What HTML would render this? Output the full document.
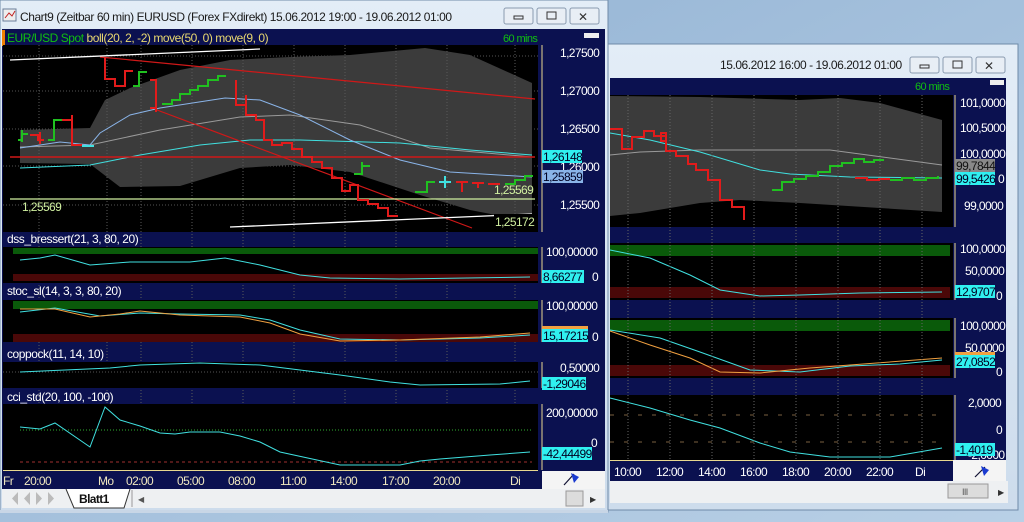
<!DOCTYPE html>
<html><head><meta charset="utf-8"><style>
body{margin:0;width:1024px;height:522px;overflow:hidden;background:#9db9d6;font-family:"Liberation Sans",sans-serif}
svg{display:block}
text{font-family:"Liberation Sans",sans-serif;letter-spacing:-0.6px}
.t{letter-spacing:-0.45px}
</style></head><body>
<svg width="1024" height="522" viewBox="0 0 1024 522" xmlns="http://www.w3.org/2000/svg">
<defs>
<linearGradient id="desk" x1="0" y1="0" x2="1" y2="1"><stop offset="0" stop-color="#8fb0d2"/><stop offset="1" stop-color="#b9d0e6"/></linearGradient>
<linearGradient id="tb" x1="0" y1="0" x2="0" y2="1"><stop offset="0" stop-color="#e3edf7"/><stop offset="1" stop-color="#cddcec"/></linearGradient>
</defs>
<rect width="1024" height="522" fill="url(#desk)"/>

<!-- RIGHT WINDOW -->
<rect x="600" y="44" width="418" height="466" fill="url(#tb)" stroke="#6f8aa8"/>
<text class="t" x="720" y="69" font-size="12" fill="#1a1a1a">15.06.2012 16:00 - 19.06.2012 01:00</text>
<g fill="#e8eef5" stroke="#8a9bb0"><rect x="910" y="57" width="29" height="16" rx="2"/><rect x="943" y="57" width="29" height="16" rx="2"/><rect x="976" y="57" width="29" height="16" rx="2"/></g>
<rect x="920" y="65" width="9" height="3" fill="none" stroke="#333"/><rect x="953" y="61" width="9" height="7" fill="none" stroke="#333"/>
<text x="984" y="70" font-size="12" fill="#333">✕</text>
<rect x="610" y="78" width="396" height="403" fill="#0b1150"/>
<text x="915" y="90" font-size="11" fill="#10c010">60 mins</text>
<rect x="990" y="80" width="14" height="5" fill="#eee"/>
<rect x="610" y="95" width="343" height="132" fill="#000"/>
<polygon points="610,96 700,97 800,100 840,98 880,103 942,120 942,212 880,208 800,203 740,200 700,203 640,213 610,216" fill="#3b3b3b"/>
<polyline points="610,155 640,152 700,150 830,150 942,165" fill="none" stroke="#9a9a9a"/>
<polyline points="610,133 650,140 700,152 760,170 790,174 850,177 942,178" fill="none" stroke="#40e0e0"/>
<path d="M610,129h12v20h10v-12h12v-6h10v5h12v5h-5v-8h5v18h10v5h12v8h8v6h12v10h12v20h12v7h12v13" fill="none" stroke="#e21b1b" stroke-width="2"/>
<path d="M772,190h10v-8h12v-3h12v-3h12v-4h12v-6h12v-3h12v-4h10v3h10v-2h10" fill="none" stroke="#20c020" stroke-width="2"/>
<path d="M855,178h12v2h12v-1h10v1" fill="none" stroke="#e21b1b" stroke-width="2"/>
<path d="M890,180h12v-2h12v2h12v-2h12v-2" fill="none" stroke="#20c020" stroke-width="2"/>
<line x1="955" y1="95" x2="955" y2="227" stroke="#e8d890"/>
<g font-size="12" fill="#fff"><text x="960" y="107">101,0000</text><text x="960" y="132">100,5000</text><text x="960" y="158">100,0000</text><text x="964" y="210">99,0000</text></g>
<rect x="955" y="159" width="40" height="13" fill="#888"/><text x="956" y="170" font-size="12" fill="#111">99,7844</text>
<rect x="955" y="172" width="40" height="13" fill="#30f0f0"/><text x="956" y="183" font-size="12" fill="#002">99,5426</text><text x="998" y="183" font-size="12" fill="#fff">0</text>
<rect x="610" y="243" width="343" height="57" fill="#000"/>
<rect x="610" y="245" width="340" height="11" fill="#0a5a0a"/><rect x="610" y="287" width="340" height="11" fill="#4a0808"/>
<polyline points="610,250 650,258 690,275 720,290 760,296 800,295 860,293 942,292" fill="none" stroke="#40e0e0"/>
<line x1="955" y1="243" x2="955" y2="300" stroke="#e8d890"/>
<g font-size="12" fill="#fff"><text x="960" y="253">100,0000</text><text x="965" y="275">50,0000</text><text x="996" y="300">0</text></g>
<rect x="955" y="285" width="40" height="13" fill="#30f0f0"/><text x="956" y="296" font-size="12" fill="#002">12,9707</text>
<rect x="610" y="318" width="343" height="60" fill="#000"/>
<rect x="610" y="320" width="340" height="11" fill="#0a5a0a"/><rect x="610" y="365" width="340" height="11" fill="#4a0808"/>
<polyline points="610,330 660,338 700,352 750,370 800,372 850,366 900,364 942,360" fill="none" stroke="#40e0e0"/>
<polyline points="610,331 650,345 690,358 720,372 760,373 810,368 850,365 942,358" fill="none" stroke="#f0a040"/>
<line x1="955" y1="318" x2="955" y2="378" stroke="#e8d890"/>
<g font-size="12" fill="#fff"><text x="960" y="330">100,0000</text><text x="965" y="352">50,0000</text><text x="996" y="376">0</text></g>
<rect x="955" y="352" width="40" height="3" fill="#f0a040"/>
<rect x="955" y="355" width="40" height="13" fill="#30f0f0"/><text x="956" y="366" font-size="12" fill="#002">27,0852</text>
<rect x="610" y="395" width="343" height="65" fill="#000"/>
<line x1="610" y1="415" x2="942" y2="415" stroke="#7a6040" stroke-dasharray="4,10"/>
<line x1="610" y1="442" x2="942" y2="442" stroke="#7a6040" stroke-dasharray="4,10"/>
<polyline points="610,398 650,408 690,420 720,428 760,443 790,452 830,457 890,457 942,448" fill="none" stroke="#40e0e0"/>
<line x1="955" y1="395" x2="955" y2="460" stroke="#e8d890"/>
<g font-size="12" fill="#fff"><text x="968" y="407">2,0000</text><text x="996" y="434">0</text><text x="968" y="459">-2,0000</text></g>
<rect x="955" y="443" width="40" height="13" fill="#30f0f0"/><text x="956" y="454" font-size="12" fill="#002">-1,4019</text>
<g stroke="#666" stroke-dasharray="1,2"><line x1="628" y1="95" x2="628" y2="460"/><line x1="670" y1="95" x2="670" y2="460"/><line x1="712" y1="95" x2="712" y2="460"/><line x1="754" y1="95" x2="754" y2="460"/><line x1="796" y1="95" x2="796" y2="460"/><line x1="838" y1="95" x2="838" y2="460"/><line x1="880" y1="95" x2="880" y2="460"/><line x1="922" y1="95" x2="922" y2="460"/></g>
<rect x="610" y="460" width="343" height="1" fill="#e8d890"/>
<g font-size="12" fill="#fff"><text x="614" y="476">10:00</text><text x="656" y="476">12:00</text><text x="698" y="476">14:00</text><text x="740" y="476">16:00</text><text x="782" y="476">18:00</text><text x="824" y="476">20:00</text><text x="866" y="476">22:00</text><text x="915" y="476">Di</text></g>
<rect x="953" y="460" width="53" height="21" fill="#f4f4f4"/>
<path d="M975,477 L985,467" stroke="#113" stroke-width="1.2"/><path d="M981,466 L989,470 L984,476 Z" fill="#1a3ad0"/>
<rect x="610" y="481" width="398" height="22" fill="#eef0f2"/>
<rect x="948" y="484" width="40" height="14" fill="#dcdcdc" stroke="#999"/><text x="962" y="495" font-size="9" fill="#555">III</text>
<text x="998" y="495" font-size="8" fill="#333">▶</text>

<!-- LEFT WINDOW -->
<rect x="0" y="0" width="608" height="512" fill="url(#tb)" stroke="#6f8aa8"/>
<rect x="3" y="9" width="13" height="12" fill="#eee" stroke="#6a7d99"/><path d="M5,18 L9,13 L12,16 L15,11" stroke="#c02020" fill="none"/>
<text class="t" x="20" y="21" font-size="12" fill="#1a1a1a">Chart9 (Zeitbar 60 min)  EURUSD (Forex FXdirekt) 15.06.2012 19:00 - 19.06.2012 01:00</text>
<g fill="#e8eef5" stroke="#8a9bb0"><rect x="504" y="8" width="29" height="16" rx="2"/><rect x="537" y="8" width="29" height="16" rx="2"/><rect x="570" y="8" width="29" height="16" rx="2"/></g>
<rect x="514" y="16" width="9" height="3" fill="none" stroke="#333"/><rect x="547" y="12" width="9" height="7" fill="none" stroke="#333"/>
<text x="578" y="21" font-size="12" fill="#333">✕</text>
<rect x="2" y="29" width="603" height="460" fill="#0b1150"/>
<rect x="2" y="30" width="3" height="16" fill="#f08000"/>
<text class="t" x="7" y="42" font-size="12"><tspan fill="#10c010">EUR/USD Spot </tspan><tspan fill="#e8d870">boll(20, 2, -2) move(50, 0) move(9, 0)</tspan></text>
<text x="503" y="42" font-size="11" fill="#10c010">60 mins</text>
<rect x="584" y="33" width="15" height="5" fill="#eee"/>
<rect x="3" y="45" width="535" height="187" fill="#000"/>
<g stroke="#555" stroke-dasharray="1,2"><line x1="3" y1="56" x2="538" y2="56"/><line x1="3" y1="91" x2="538" y2="91"/><line x1="3" y1="129" x2="538" y2="129"/><line x1="3" y1="166" x2="538" y2="166"/><line x1="3" y1="205" x2="538" y2="205"/></g>
<polygon points="20,130 90,128 105,100 130,88 180,70 230,60 290,57 350,55 425,48 470,55 532,83 532,222 470,210 420,195 350,172 290,165 240,168 180,186 120,187 90,164 20,163" fill="#3b3b3b"/>
<g stroke="#5a5a5a" stroke-dasharray="1,2"><line x1="39" y1="45" x2="39" y2="470"/><line x1="107" y1="45" x2="107" y2="470"/><line x1="141" y1="45" x2="141" y2="470"/><line x1="192" y1="45" x2="192" y2="470"/><line x1="243" y1="45" x2="243" y2="470"/><line x1="294" y1="45" x2="294" y2="470"/><line x1="345" y1="45" x2="345" y2="470"/><line x1="396" y1="45" x2="396" y2="470"/><line x1="447" y1="45" x2="447" y2="470"/><line x1="515" y1="45" x2="515" y2="470"/></g>
<polyline points="20,147 90,145 160,130 240,117 290,115 360,125 430,148 532,157" fill="none" stroke="#9a9a9a"/>
<polyline points="20,168 90,165 140,155 200,145 250,140 300,140 400,143 470,150 532,155" fill="none" stroke="#40e0e0"/>
<polyline points="20,148 60,142 90,145 100,133 130,115 160,108 225,98 260,100 300,115 350,140 400,160 450,172 532,177" fill="none" stroke="#8ab4e8"/>
<line x1="10" y1="157" x2="535" y2="157" stroke="#d01818" stroke-width="1.5"/>
<line x1="100" y1="57" x2="535" y2="99" stroke="#d01818" stroke-width="1.2"/>
<line x1="157" y1="110" x2="472" y2="228" stroke="#d01818" stroke-width="1.2"/>
<line x1="10" y1="60" x2="260" y2="49" stroke="#fff" stroke-width="1.3"/>
<line x1="230" y1="227" x2="532" y2="214" stroke="#fff" stroke-width="1.3"/>
<line x1="10" y1="199" x2="535" y2="199" stroke="#d0f0a0" stroke-width="1.2"/>
<path d="M18,140h4m0,-10v12m0,-8h6" stroke="#20c020" stroke-width="2" fill="none"/>
<path d="M30,135h8v5h6m-4,-8v12" stroke="#e21b1b" stroke-width="2" fill="none"/>
<path d="M48,140h6v-20h8" stroke="#20c020" stroke-width="2" fill="none"/>
<path d="M62,120h10v25h10m-10,-30v30" stroke="#e21b1b" stroke-width="2" fill="none"/>
<path d="M82,146h12" stroke="#40e0e0" stroke-width="2" fill="none"/>
<path d="M105,57v22h10v7h10v-15h8" stroke="#e21b1b" stroke-width="2" fill="none"/>
<path d="M133,86h6v-14h8m-8,0v12" stroke="#20c020" stroke-width="2" fill="none"/>
<path d="M150,80h6v28h-6m6,-26v30" stroke="#e21b1b" stroke-width="2" fill="none"/>
<path d="M162,104h10v-4h8v-6h10v-4h8v-4h10v-6h10v-4h8" stroke="#20c020" stroke-width="2" fill="none"/>
<path d="M236,80v25h10v-6m0,-4v20h10v5h8v20h8v5h10v-2h10v6h10v8h10v5h10v6h10v10h10v13h8v-6h8v15h10v4h10v4h10v8h10" stroke="#e21b1b" stroke-width="2" fill="none"/>
<path d="M354,174h8v-12m0,4h8" stroke="#20c020" stroke-width="2" fill="none"/>
<path d="M415,192h12v-10h8" stroke="#20c020" stroke-width="2" fill="none"/>
<path d="M439,182h12m-6,-6v12" stroke="#40e0e0" stroke-width="2" fill="none"/>
<path d="M456,182h12m-6,0v10m10,-9h12m-6,0v5m10,-4h12" stroke="#e21b1b" stroke-width="2" fill="none"/>
<path d="M505,184h10v-4h10v-4h8" stroke="#20c020" stroke-width="2" fill="none"/>
<text x="22" y="211" font-size="12" fill="#d0f0a0">1,25569</text>
<text x="494" y="194" font-size="12" fill="#d0f0a0">1,25569</text>
<rect x="494" y="214" width="40" height="13" fill="#000"/><text x="495" y="226" font-size="12" fill="#d0f0a0">1,25172</text>
<line x1="542" y1="45" x2="542" y2="232" stroke="#e8d890"/>
<g font-size="12" fill="#fff"><text x="560" y="57">1,27500</text><text x="560" y="95">1,27000</text><text x="560" y="133">1,26500</text><text x="560" y="171">1,26000</text><text x="560" y="209">1,25500</text></g>
<rect x="542" y="150" width="40" height="13" fill="#30f0f0"/><text x="543" y="161" font-size="12" fill="#002">1,26148</text>
<rect x="542" y="170" width="41" height="13" fill="#8ab4e8"/><text x="543" y="181" font-size="12" fill="#002">1,25859</text>
<text class="t" x="7" y="243" font-size="12" fill="#fff">dss_bressert(21, 3, 80, 20)</text>
<rect x="3" y="247" width="535" height="36" fill="#000"/>
<rect x="13" y="248" width="525" height="6" fill="#0a5a0a"/><rect x="13" y="274" width="525" height="7" fill="#4a0808"/>
<polyline points="20,260 40,258 55,255 90,265 130,262 190,262 225,258 260,265 300,275 330,278 400,279 530,277" fill="none" stroke="#40e0e0"/>
<line x1="542" y1="247" x2="542" y2="283" stroke="#e8d890"/>
<text x="546" y="256" font-size="12" fill="#fff">100,00000</text>
<rect x="542" y="270" width="42" height="13" fill="#30f0f0"/><text x="543" y="281" font-size="12" fill="#002">8,66277</text><text x="592" y="281" font-size="12" fill="#fff">0</text>
<text class="t" x="7" y="295" font-size="12" fill="#fff">stoc_sl(14, 3, 3, 80, 20)</text>
<rect x="3" y="300" width="535" height="42" fill="#000"/>
<rect x="13" y="301" width="525" height="8" fill="#0a5a0a"/><rect x="13" y="334" width="525" height="8" fill="#4a0808"/>
<polyline points="20,312 55,308 100,316 140,313 180,314 240,315 270,320 300,330 340,339 400,340 480,338 530,335" fill="none" stroke="#40e0e0"/>
<polyline points="20,309 55,309 90,317 120,314 140,311 180,315 240,317 270,323 300,334 340,341 400,340 480,337 530,333" fill="none" stroke="#f0a040"/>
<line x1="542" y1="300" x2="542" y2="342" stroke="#e8d890"/>
<text x="546" y="310" font-size="12" fill="#fff">100,00000</text>
<rect x="542" y="326" width="46" height="3" fill="#f0a040"/>
<rect x="542" y="329" width="46" height="13" fill="#30f0f0"/><text x="543" y="340" font-size="12" fill="#002">15,17215</text><text x="592" y="341" font-size="12" fill="#fff">0</text>
<text class="t" x="7" y="358" font-size="12" fill="#fff">coppock(11, 14, 10)</text>
<rect x="3" y="362" width="535" height="26" fill="#000"/>
<line x1="3" y1="372" x2="538" y2="372" stroke="#555" stroke-dasharray="1,2"/>
<polyline points="20,372 110,368 140,365 200,363 260,365 300,370 340,375 390,382 420,385 500,384 530,381" fill="none" stroke="#40e0e0"/>
<line x1="542" y1="362" x2="542" y2="388" stroke="#e8d890"/>
<text x="560" y="372" font-size="12" fill="#fff">0,50000</text>
<rect x="542" y="377" width="44" height="13" fill="#30f0f0"/><text x="543" y="388" font-size="12" fill="#002">-1,29046</text>
<text class="t" x="7" y="401" font-size="12" fill="#fff">cci_std(20, 100, -100)</text>
<rect x="3" y="404" width="535" height="66" fill="#000"/>
<line x1="20" y1="430" x2="532" y2="430" stroke="#30b030" stroke-dasharray="1,2"/>
<line x1="20" y1="462" x2="532" y2="462" stroke="#a03030" stroke-dasharray="3,3"/>
<polyline points="20,427 40,429 55,423 90,447 105,407 120,420 140,426 160,433 175,434 190,432 220,432 240,436 260,442 280,452 340,465 400,465 420,461 440,459 490,455 530,452" fill="none" stroke="#40e0e0"/>
<line x1="542" y1="404" x2="542" y2="470" stroke="#e8d890"/>
<text x="546" y="417" font-size="12" fill="#fff">200,00000</text><text x="591" y="447" font-size="12" fill="#fff">0</text>
<rect x="542" y="447" width="50" height="13" fill="#30f0f0"/><text x="543" y="458" font-size="12" fill="#002">-42,44499</text>
<rect x="3" y="470" width="535" height="1" fill="#e8d890"/>
<g font-size="12" fill="#f0e8c0"><text x="3" y="485">Fr</text><text x="24" y="485">20:00</text><text x="98" y="485">Mo</text><text x="126" y="485">02:00</text><text x="177" y="485">05:00</text><text x="228" y="485">08:00</text><text x="280" y="485">11:00</text><text x="330" y="485">14:00</text><text x="382" y="485">17:00</text><text x="433" y="485">20:00</text><text x="510" y="485">Di</text></g>
<rect x="542" y="471" width="63" height="18" fill="#f4f4f4"/>
<path d="M564,485 L574,474" stroke="#113" stroke-width="1.2"/><path d="M571,473 L579,477 L574,483 Z" fill="#1a3ad0"/>
<rect x="2" y="489" width="603" height="19" fill="#eef0f2"/>
<g fill="#bbb"><path d="M8,492v13M18,492l-6,6.5 6,6.5z"/><path d="M30,492l-6,6.5 6,6.5z"/><path d="M36,492l6,6.5-6,6.5z"/><path d="M48,492l6,6.5-6,6.5zM58,492v13"/></g>
<path d="M66,489 L74,508 L124,508 L130,489" fill="#fff" stroke="#333"/>
<text x="79" y="503" font-size="12" font-weight="bold" fill="#111">Blatt1</text>
<line x1="132" y1="490" x2="132" y2="507" stroke="#999"/>
<text x="138" y="502" font-size="8" fill="#555">◀</text>
<rect x="566" y="491" width="17" height="15" fill="#dcdcdc" stroke="#999"/>
<text x="590" y="502" font-size="8" fill="#333">▶</text>
<rect x="0" y="510" width="608" height="3" fill="#c8d6e6"/>
</svg>
</body></html>
